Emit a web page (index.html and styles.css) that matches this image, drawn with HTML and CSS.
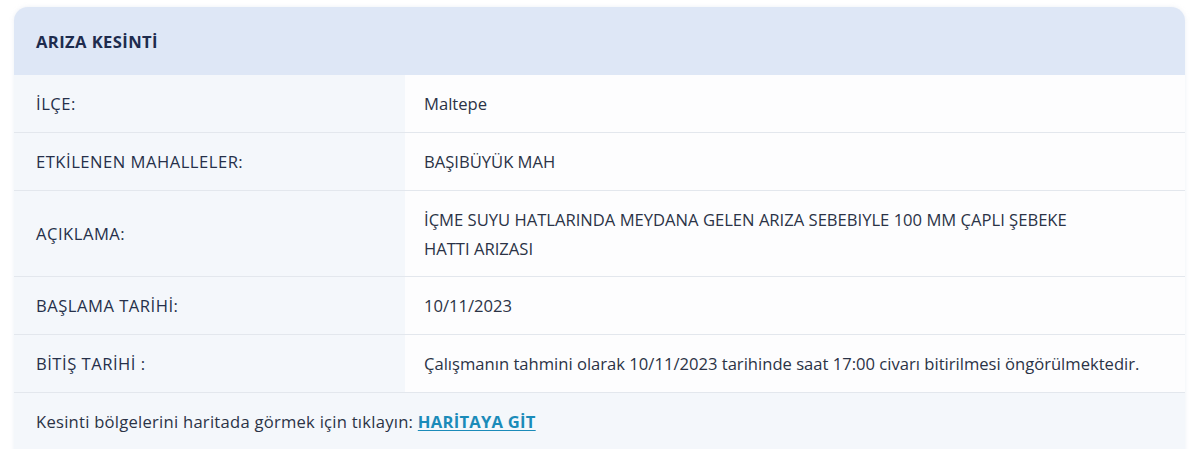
FILE: index.html
```html
<!DOCTYPE html>
<html lang="tr">
<head>
<meta charset="utf-8">
<link rel="stylesheet" href="styles.css">
</head>
<body>
<div class="page">
  <div class="card">
    <div class="card-head">ARIZA KESİNTİ</div>
    <div class="row">
      <div class="label">İLÇE:</div>
      <div class="value">Maltepe</div>
    </div>
    <div class="row">
      <div class="label">ETKİLENEN MAHALLELER:</div>
      <div class="value">BAŞIBÜYÜK MAH</div>
    </div>
    <div class="row row-tall">
      <div class="label">AÇIKLAMA:</div>
      <div class="value">İÇME SUYU HATLARINDA MEYDANA GELEN ARIZA SEBEBIYLE 100 MM ÇAPLI ŞEBEKE<br>HATTI ARIZASI</div>
    </div>
    <div class="row">
      <div class="label">BAŞLAMA TARİHİ:</div>
      <div class="value">10/11/2023</div>
    </div>
    <div class="row">
      <div class="label">BİTİŞ TARİHİ :</div>
      <div class="value">Çalışmanın tahmini olarak 10/11/2023 tarihinde saat 17:00 civarı bitirilmesi öngörülmektedir.</div>
    </div>
    <div class="card-foot">Kesinti bölgelerini haritada görmek için tıklayın: <a class="map-link" href="#">HARİTAYA GİT</a></div>
  </div>
</div>
</body>
</html>
```
FILE: styles.css
```css
html, body {
  margin: 0;
  padding: 0;
  background: #ffffff;
}
body {
  font-family: "Open Sans", "Lato", sans-serif;
  color: #2b3346;
  font-size: 16.6px;
}
.page {
  padding: 7px 15px 0 14px;
}
.card {
  border-radius: 14px;
  overflow: hidden;
  background: #f4f7fb;
  box-shadow: 0 0 4px rgba(200, 210, 225, 0.35);
  height: 460px;
}
.card-head {
  background: #dee7f6;
  height: 68px;
  display: flex;
  align-items: center;
  padding-left: 22px;
  font-weight: 700;
  letter-spacing: 0.4px;
  color: #1e2c4e;
}
.row {
  display: grid;
  grid-template-columns: 391px 1fr;
  min-height: 57px;
  border-bottom: 1px solid #e3e7ed;
}
.row-tall {
  min-height: 85px;
}
.row .label {
  background: #f4f7fb;
  padding-left: 22px;
  display: flex;
  align-items: center;
  font-weight: 500;
  letter-spacing: 0.5px;
  color: #26304a;
}
.row .value {
  background: #fdfdfe;
  padding: 0 19px;
  display: flex;
  align-items: center;
  line-height: 29px;
}
.card-foot {
  height: 56px;
  display: flex;
  align-items: center;
  padding-left: 22px;
  white-space: pre;
  letter-spacing: 0.25px;
}
.map-link {
  color: #1b8bb9;
  font-weight: 700;
  text-decoration: underline;
  text-underline-offset: 2px;
}
```
